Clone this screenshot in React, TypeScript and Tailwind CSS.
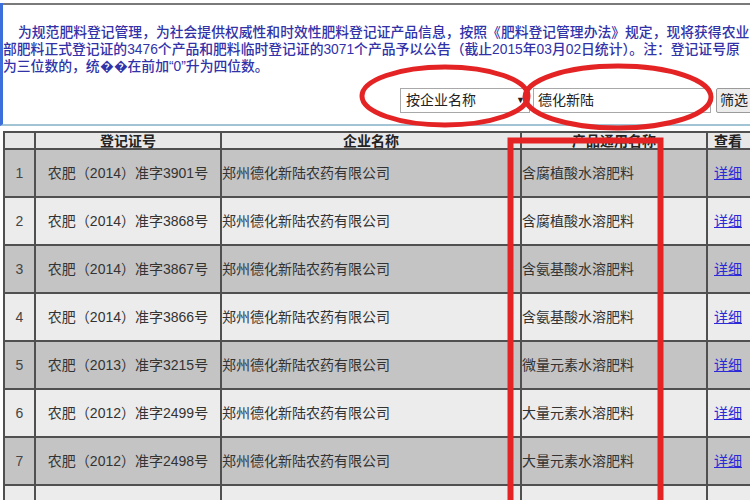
import React from "react";

const rows = [
  { n: 1, no: "农肥（2014）准字3901号", p: "含腐植酸水溶肥料" },
  { n: 2, no: "农肥（2014）准字3868号", p: "含腐植酸水溶肥料" },
  { n: 3, no: "农肥（2014）准字3867号", p: "含氨基酸水溶肥料" },
  { n: 4, no: "农肥（2014）准字3866号", p: "含氨基酸水溶肥料" },
  { n: 5, no: "农肥（2013）准字3215号", p: "微量元素水溶肥料" },
  { n: 6, no: "农肥（2012）准字2499号", p: "大量元素水溶肥料" },
  { n: 7, no: "农肥（2012）准字2498号", p: "大量元素水溶肥料" },
];

export default function App() {
  return (
    <div className="relative w-[750px] h-[500px] overflow-hidden bg-white font-['Liberation_Sans','Noto_Sans_CJK_SC',sans-serif]">
      <div className="h-[123px] border-l-[3px] border-l-[#3d6fdc] border-b-2 border-b-[#a3c4d4]">
        <div className="mt-[3px] h-[2px] bg-[#7a7a7a]" />
        <div className="mt-[19px] text-[13.8px] leading-[17px] text-[#3232a8] font-medium whitespace-nowrap">
          <div className="pl-[15px]">为规范肥料登记管理，为社会提供权威性和时效性肥料登记证产品信息，按照《肥料登记管理办法》规定，现将获得农业</div>
          <div>部肥料正式登记证的3476个产品和肥料临时登记证的3071个产品予以公告（截止2015年03月02日统计）。注：登记证号原</div>
          <div>为三位数的，统{"\uFFFD\uFFFD"}在前加“0”升为四位数。</div>
        </div>
        <div className="mt-[13px] flex h-[25px] pl-[397px] gap-[3px] text-[14px] text-[#222]">
          <div className="w-[130px] shrink-0 flex items-center justify-between border border-[#a8a8a8] bg-white pl-[5px] pr-[4px]">
            <span>按企业名称</span>
            <span className="text-[9px]">▼</span>
          </div>
          <div className="w-[178px] shrink-0 flex items-center border border-[#a8a8a8] bg-white pl-[4px]">
            德化新陆
          </div>
          <div className="ml-[2px] w-[40px] shrink-0 flex items-center pl-[3px] border border-[#9a9a9a] rounded-[2px] bg-[#ececec]">
            筛选
          </div>
        </div>
      </div>
      <div className="mt-[5px] pl-[3px]">
        <table className="border-collapse table-fixed w-[775px] text-[14px] leading-[16px] text-[#333]">
          <colgroup>
            <col className="w-[31px]" />
            <col className="w-[186px]" />
            <col className="w-[300px]" />
            <col className="w-[186px]" />
            <col className="w-[72px]" />
          </colgroup>
          <thead>
            <tr className="h-[17px] bg-[#e8e8e8] font-bold text-[#222] leading-[14px]">
              <th className="p-0 border-2 border-[#505050]"></th>
              <th className="p-0 border-2 border-[#505050] text-center">登记证号</th>
              <th className="p-0 border-2 border-[#505050] text-center">企业名称</th>
              <th className="p-0 border-2 border-[#505050] text-center">产品通用名称</th>
              <th className="p-0 border-2 border-[#505050] text-left pl-[6px]">查看</th>
            </tr>
          </thead>
          <tbody>
            {rows.map((r) => (
              <tr key={r.n} className={`h-[48px] ${r.n % 2 === 1 ? "bg-[#c4c4c4]" : "bg-[#ececec]"}`}>
                <td className="p-0 border-2 border-[#505050] text-center text-[#444]">{r.n}</td>
                <td className="p-0 border-2 border-[#505050] text-center">{r.no}</td>
                <td className="p-0 border-2 border-[#505050] text-left">郑州德化新陆农药有限公司</td>
                <td className="p-0 border-2 border-[#505050] text-left">{r.p}</td>
                <td className="p-0 border-2 border-[#505050] text-left pl-[6px]">
                  <span className="text-[#2a2ad6] underline">详细</span>
                </td>
              </tr>
            ))}
            <tr className="h-[48px] bg-[#ececec]">
              <td className="p-0 border-2 border-[#505050]"></td>
              <td className="p-0 border-2 border-[#505050]"></td>
              <td className="p-0 border-2 border-[#505050]"></td>
              <td className="p-0 border-2 border-[#505050]"></td>
              <td className="p-0 border-2 border-[#505050]"></td>
            </tr>
          </tbody>
        </table>
      </div>
      <svg className="pointer-events-none absolute left-0 top-0" width="750" height="500" viewBox="0 0 750 500">
        <ellipse cx="445" cy="96" rx="83" ry="29" fill="none" stroke="#e42424" strokeWidth="5" />
        <ellipse cx="618" cy="97" rx="93" ry="31" fill="none" stroke="#e42424" strokeWidth="5" />
        <rect x="510.5" y="140.5" width="150" height="400" fill="none" stroke="#e42424" strokeWidth="6" />
      </svg>
    </div>
  );
}
